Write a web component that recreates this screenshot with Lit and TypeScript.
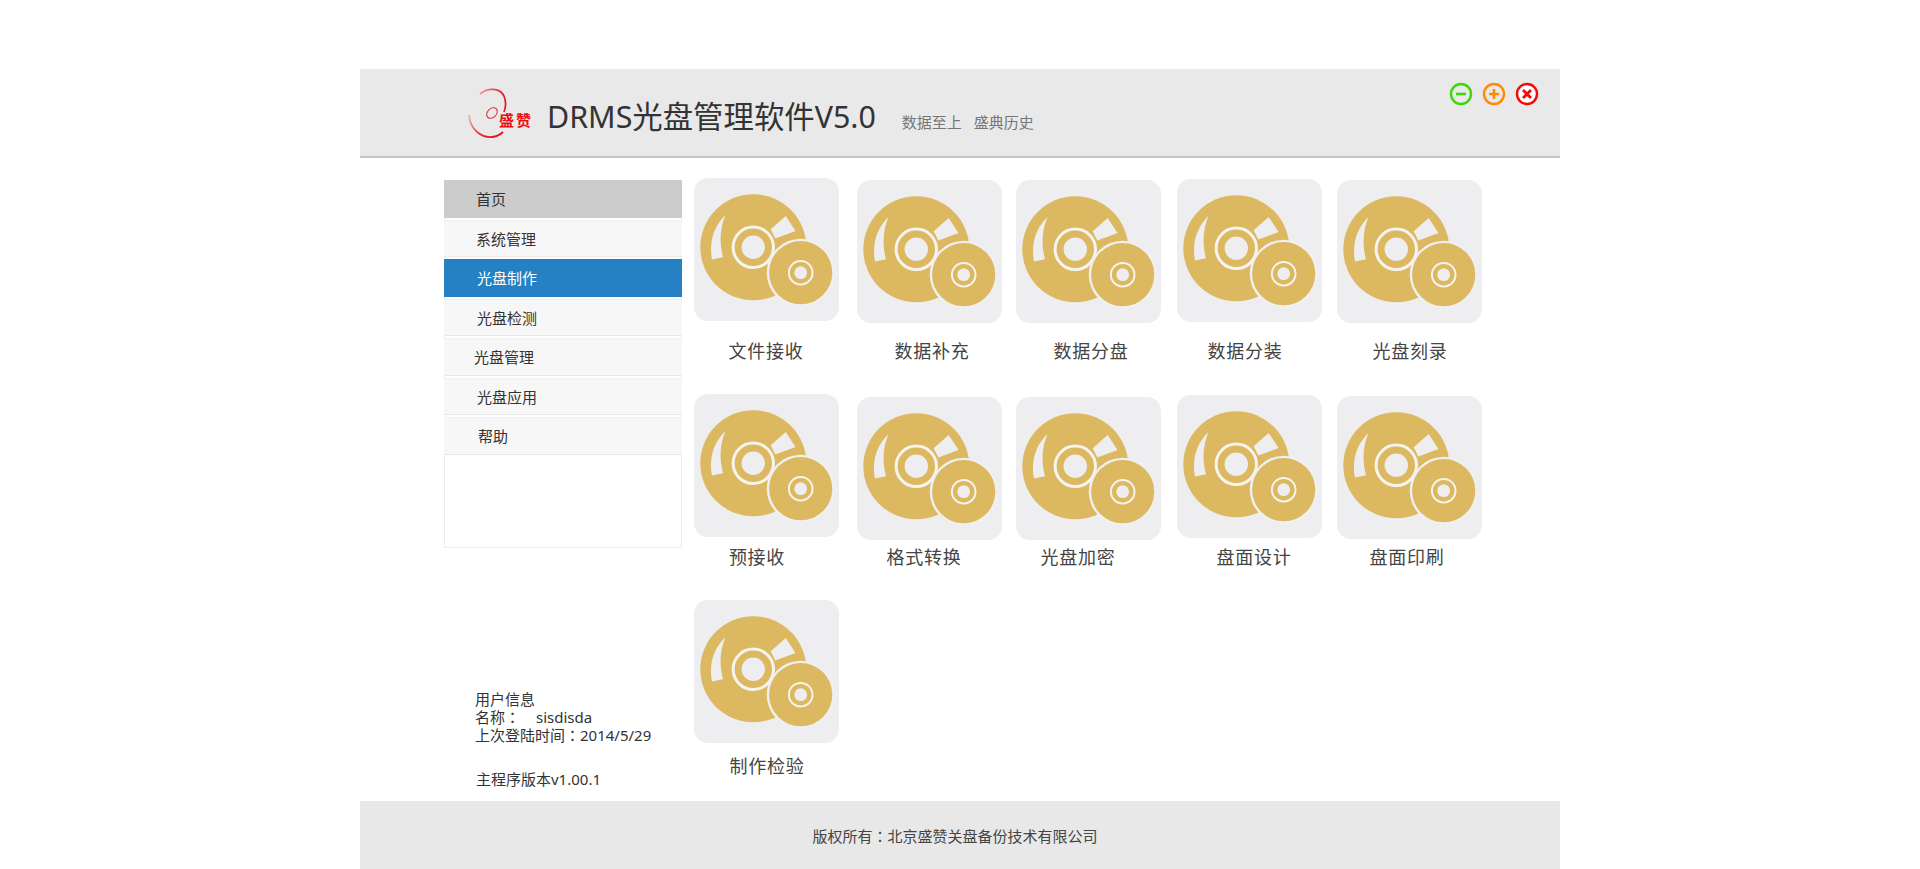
import { LitElement, html, css, svg } from "lit";
import { customElement } from "lit/decorators.js";

const TILES = [
  [
    { t: "文件接收", x: 694, y: 178, cx: 766 },
    { t: "数据补充", x: 857, y: 180, cx: 932 },
    { t: "数据分盘", x: 1016, y: 180, cx: 1091 },
    { t: "数据分装", x: 1177, y: 179, cx: 1245 },
    { t: "光盘刻录", x: 1337, y: 180, cx: 1410 },
  ],
  [
    { t: "预接收", x: 694, y: 394, cx: 757 },
    { t: "格式转换", x: 857, y: 397, cx: 924 },
    { t: "光盘加密", x: 1016, y: 397, cx: 1078 },
    { t: "盘面设计", x: 1177, y: 395, cx: 1254 },
    { t: "盘面印刷", x: 1337, y: 396, cx: 1407 },
  ],
  [{ t: "制作检验", x: 694, y: 600, cx: 767 }],
];
const ROW_LABEL_Y = [351, 557, 766];
const MENU = [
  { t: "首页", x: 32, cls: "home" },
  { t: "系统管理", x: 32, cls: "" },
  { t: "光盘制作", x: 33, cls: "active" },
  { t: "光盘检测", x: 33, cls: "" },
  { t: "光盘管理", x: 30, cls: "" },
  { t: "光盘应用", x: 33, cls: "" },
  { t: "帮助", x: 34, cls: "" },
];

const disc = svg`<svg class="disc" viewBox="0 0 144 143" width="144" height="143">
  <circle cx="59.3" cy="69.3" r="53" fill="#dcb860"/>
  <path d="M31.5 37 C21 47 14.500 62 18 81.5 L29 79.3 C25 64 26 50 31.5 37 Z" fill="#eeeef1"/>
  <path d="M91.7 38 L101.5 53 L81.3 60.5 L76.7 51.3 Z" fill="#eeeef1"/>
  <circle cx="59.3" cy="69.3" r="20.2" fill="none" stroke="#f6f4ee" stroke-width="3"/>
  <circle cx="59.3" cy="69.3" r="11.7" fill="#eeeef1"/>
  <circle cx="106.7" cy="94.7" r="34" fill="#f0f0f2"/>
  <circle cx="106.7" cy="94.7" r="31.6" fill="#dcb860"/>
  <circle cx="106.7" cy="94.7" r="11.8" fill="none" stroke="#f6f4ee" stroke-width="2"/>
  <circle cx="106.7" cy="94.7" r="6.4" fill="#eeeef1"/>
</svg>`;

@customElement("app-root")
export class AppRoot extends LitElement {
  static styles = css`
    :host { display: block; background: #fff; height: 869px; overflow: hidden;
      font-family: "Noto Sans", "Noto Sans CJK SC", sans-serif; color: #333; }
    .panel { width: 1200px; margin: 0 auto; padding-top: 69px; }
    .header { position: relative; height: 87px; background: #e9e9e9; border-bottom: 2px solid #c4c4c4;
      display: flex; align-items: center; padding-left: 108px; }
    .logo { width: 64px; height: 52px; flex: none; position: relative; margin-top: 2px; }
    .logo svg { display: block; }
    .logo span { position: absolute; left: 31px; top: 23px; font-size: 15px; line-height: 18px; font-weight: 700;
      color: #ee0c12; letter-spacing: 2px; white-space: nowrap; }
    .title { margin-left: 15px; margin-top: 8px; font-size: 30.4px; line-height: 40px; color: #333; white-space: nowrap; }
    .slogan { margin-left: 26px; margin-top: 17px; font-size: 15px; color: #777; display: flex; gap: 12px; white-space: nowrap; }
    .ctrls { position: absolute; right: 21px; top: 13px; display: flex; gap: 9px; }
    .ctrls svg { display: block; }
    .main { height: 643px; display: flex; padding-left: 84px; }
    .side { width: 238px; flex: none; display: flex; flex-direction: column; }
    .menu { margin-top: 22px; height: 368px; box-sizing: border-box; border: 1px solid #ececec; border-top: 0;
      display: flex; flex-direction: column; gap: 2px; }
    .item { height: 37.5px; margin: 0 -1px; box-sizing: border-box; background: #f7f7f7; border-bottom: 1px solid #e9e9e9;
      border-top: 1px solid #f0f0f0; font-size: 15px; display: flex; align-items: center; color: #333; }
    .item.home { background: #cccccc; border-color: #cccccc; }
    .item.active { background: #2581c4; border-color: #2581c4; color: #fff; }
    .info { margin-top: 142px; padding-left: 31px; font-size: 15px; line-height: 18px; color: #333; }
    .info .gap { display: inline-block; width: 16px; }
    .colon { font-family: "Noto Sans CJK TC", sans-serif; }
    .version { margin-top: 26px; padding-left: 32px; font-size: 15px; line-height: 18px; color: #333; }
    .grid { flex: 1; position: relative; padding-left: 12px; display: flex; flex-direction: column; }
    .row { display: flex; position: relative; }
    .cell { position: absolute; top: 0; width: 0; }
    .tile { width: 144.5px; height: 143px; border-radius: 14px; background: #eeeef1; }
    .disc { display: block; }
    .label { position: absolute; width: 160px; text-align: center; font-size: 18px; line-height: 24px; color: #444;
      white-space: nowrap; letter-spacing: 0.75px; }
    .footer { height: 68px; background: #e8e8e8; display: flex; align-items: center; justify-content: center;
      font-size: 15px; color: #444; padding-right: 10px; box-sizing: border-box; }
  `;

  render() {
    const top = 158;
    const rowTop = [178, 394, 600];
    return html`<div class="panel">
      <div class="header">
        <div class="logo">
          <svg width="64" height="52" viewBox="0 0 64 52">
            <defs>
              <linearGradient id="a1" x1="0" y1="0" x2="1" y2="0.5"><stop offset="0" stop-color="#f0a8a8"/><stop offset="0.6" stop-color="#e8242c"/><stop offset="1" stop-color="#e8141c"/></linearGradient>
              <linearGradient id="a2" x1="0" y1="0" x2="1" y2="0.6"><stop offset="0" stop-color="#eeb4b4"/><stop offset="0.7" stop-color="#e8242c"/><stop offset="1" stop-color="#e8141c"/></linearGradient>
            </defs>
            <path d="M12 6 C20 -1 32 0 36 8 C38 13 38 19 36 24" fill="none" stroke="url(#a1)" stroke-width="1.7"/>
            <path d="M1 27 C2 42 14 50 24 49 C29 48.500 33 46 35 44" fill="none" stroke="url(#a2)" stroke-width="1.8"/>
            <ellipse cx="24" cy="25" rx="6" ry="4.500" transform="rotate(-45 24 25)" fill="none" stroke="#e4343a" stroke-width="1.100"/>
          </svg>
          <span>盛赞</span>
        </div>
        <div class="title">DRMS光盘管理软件V5.0</div>
        <div class="slogan"><span>数据至上</span><span>盛典历史</span></div>
        <div class="ctrls">
          <svg width="24" height="24" viewBox="0 0 24 24"><circle cx="12" cy="12" r="10" fill="none" stroke="#3fd60c" stroke-width="2.400"/><path d="M7 12h10" stroke="#3fd60c" stroke-width="2.600"/></svg>
          <svg width="24" height="24" viewBox="0 0 24 24"><circle cx="12" cy="12" r="10" fill="none" stroke="#ff8a05" stroke-width="2.400"/><path d="M7 12h10M12 7v10" stroke="#ff8a05" stroke-width="2.600"/></svg>
          <svg width="24" height="24" viewBox="0 0 24 24"><circle cx="12" cy="12" r="10" fill="#fff" stroke="#f50a0a" stroke-width="2.400"/><path d="M8 8l8 8M16 8l-8 8" stroke="#f50a0a" stroke-width="2.800"/></svg>
        </div>
      </div>
      <div class="main">
        <div class="side">
          <div class="menu">
            ${MENU.map((m) => html`<div class="item ${m.cls}" style="padding-left:${m.x}px">${m.t}</div>`)}
          </div>
          <div class="info">
            <div>用户信息</div>
            <div>名称<span class="colon">：</span><span class="gap"></span>sisdisda</div>
            <div>上次登陆时间<span class="colon">：</span>2014/5/29</div>
          </div>
          <div class="version">主程序版本v1.00.1</div>
        </div>
        <div class="grid">
          ${TILES.map((row, r) => html`<div class="row" style="height:${(rowTop[r + 1] ?? 801) - rowTop[r]}px;${r === 0 ? `margin-top:${rowTop[0] - top}px` : ""}">
            ${row.map((c) => html`<div class="cell" style="left:${c.x - 694}px;top:${c.y - rowTop[r]}px">
              <div class="tile">${disc}</div>
              <div class="label" style="left:${c.cx - c.x - 80}px;top:${ROW_LABEL_Y[r] - 12 - c.y}px">${c.t}</div>
            </div>`)}
          </div>`)}
        </div>
      </div>
      <div class="footer"><span>版权所有<span class="colon">：</span>北京盛赞关盘备份技术有限公司</span></div>
    </div>`;
  }
}
